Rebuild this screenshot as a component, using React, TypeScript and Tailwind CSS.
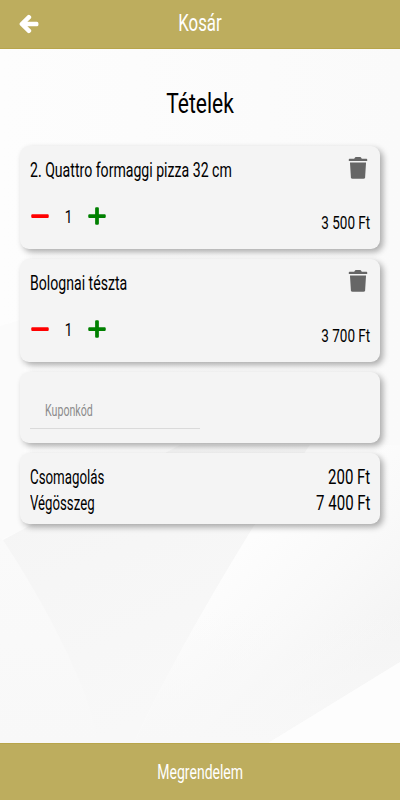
import type { ReactNode } from 'react';
import { FaArrowLeft, FaMinus, FaPlus } from 'react-icons/fa';

interface CartItem {
  id: number;
  name: string;
  quantity: number;
  price: string;
}

const items: CartItem[] = [
  { id: 1, name: '2. Quattro formaggi pizza 32 cm', quantity: 1, price: '3 500 Ft' },
  { id: 2, name: 'Bolognai tészta', quantity: 1, price: '3 700 Ft' },
];

function Card({ children, className }: { children: ReactNode; className: string }) {
  return (
    <div className={`mx-5 rounded-[9px] bg-[#f4f4f4] px-2.5 shadow-[3px_3px_6px_rgba(0,0,0,0.33)] ${className}`}>
      {children}
    </div>
  );
}

function TrashIcon({ className }: { className: string }) {
  return (
    <svg className={className} viewBox="0 0 20 22" fill="currentColor">
      <path d="M1.5 1.7 H6.2 L7 .5 Q7.2 .1 7.7 .1 H12.3 Q12.8 .1 13 .5 L13.8 1.7 H18.5 Q19.2 1.7 19.2 2.4 V4 H.8 V2.4 Q.8 1.7 1.5 1.7 Z" />
      <path d="M2 5.5 H18 L17.1 20.2 Q17 21.8 15.4 21.8 H4.6 Q3 21.8 2.9 20.2 Z" />
    </svg>
  );
}

function Backdrop() {
  return (
    <svg className="absolute inset-0 -z-10 h-full w-full" viewBox="0 0 400 694" preserveAspectRatio="none">
      <defs>
        <linearGradient id="sky" x1="0" y1="0" x2="1" y2="0">
          <stop offset="0" stopColor="#fdfdfd" />
          <stop offset="1" stopColor="#fafafa" />
        </linearGradient>
        <linearGradient id="wide" gradientUnits="userSpaceOnUse" x1="20" y1="460" x2="120" y2="680">
          <stop offset="0" stopColor="#f5f5f5" />
          <stop offset="1" stopColor="#f8f8f8" />
        </linearGradient>
        <linearGradient id="corner" x1="0" y1="0" x2="0" y2="1">
          <stop offset="0" stopColor="#fafafa" />
          <stop offset="1" stopColor="#f8f8f8" />
        </linearGradient>
        <linearGradient id="fold" gradientUnits="userSpaceOnUse" x1="250" y1="490" x2="370" y2="610">
          <stop offset="0" stopColor="#fdfdfd" />
          <stop offset="0.5" stopColor="#f9f9f9" />
          <stop offset="1" stopColor="#f4f4f4" />
        </linearGradient>
        <linearGradient id="foldEnd" gradientUnits="userSpaceOnUse" x1="0" y1="560" x2="0" y2="694">
          <stop offset="0" stopColor="#f8f8f8" stopOpacity="0" />
          <stop offset="1" stopColor="#f8f8f8" />
        </linearGradient>
      </defs>
      <rect width="400" height="694" fill="url(#sky)" />
      <path d="M0 277 L24 270 L24 480 L0 491 Z" fill="#fbfbfb" />
      <path d="M3 491 L180 396 L310 396 L252 480 Q175 605 134 694 L0 694 Z" fill="url(#wide)" />
      <path d="M0 488 L3 491 Q55 570 85 645 L100 694 L0 694 Z" fill="url(#corner)" />
      <path d="M310 396 L400 396 L400 613 L268 694 L134 694 Q175 605 252 480 Z" fill="url(#fold)" />
      <path d="M400 560 L400 613 L268 694 L134 694 Q165 628 202 560 Z" fill="url(#foldEnd)" />
      <path d="M400 613 L400 694 L268 694 Z" fill="#fdfdfd" />
    </svg>
  );
}

export default function App() {
  return (
    <div className="flex h-[800px] w-full flex-col overflow-hidden font-[Roboto,sans-serif] text-black">
      {/* Header */}
      <header className="grid h-[49px] shrink-0 grid-cols-[1fr_auto_1fr] items-center border-b border-[#b8a54b] bg-[#bdad5e] text-white">
        <button className="ml-[19px] w-5">
          <FaArrowLeft className="h-5 w-5 overflow-visible stroke-white stroke-[36px]" />
        </button>
        <h1 className="scale-x-[0.7] pb-0.5 text-2xl">Kosár</h1>
      </header>

      <main className="relative isolate flex flex-1 flex-col gap-2.5">
        <Backdrop />
        <h2 className="mt-[37px] mb-[14px] scale-x-[0.75] text-center text-[28px] leading-9">Tételek</h2>

        {/* Cart items */}
        {items.map((item) => (
          <Card key={item.id} className="flex h-[103px] justify-between">
            <div className="flex w-[220px] flex-col">
              <h3 className="mt-[10px] origin-left scale-x-[0.705] text-xl leading-7 whitespace-nowrap">{item.name}</h3>
              <div className="mt-[18px] flex h-7 items-start">
                <FaMinus className="mt-1 h-5 w-5 text-[#ff0000]" />
                <span className="mt-[3px] w-[37px] scale-x-[0.75] text-center text-lg leading-6">{item.quantity}</span>
                <FaPlus className="mt-1 h-5 w-5 text-[#008000]" />
              </div>
            </div>
            <div className="flex flex-col items-end">
              <TrashIcon className="mt-[11px] mr-[2px] h-[22px] w-5 text-[#666666]" />
              <span className="mt-[32px] origin-right scale-x-[0.75] text-lg leading-6 whitespace-nowrap">{item.price}</span>
            </div>
          </Card>
        ))}

        {/* Coupon */}
        <Card className="h-[71px]">
          <div className="mt-[18px] flex h-[39px] w-[170px] items-center border-b border-[#dadada] pt-1 pl-[15px]">
            <span className="origin-left scale-x-[0.665] text-base text-[#8c8c8c]">Kuponkód</span>
          </div>
        </Card>

        {/* Totals */}
        <Card className="h-[71px] pt-[11px] text-xl leading-[26px]">
          <div className="flex justify-between">
            <span className="origin-left scale-x-[0.665]">Csomagolás</span>
            <span className="origin-right scale-x-[0.75]">200 Ft</span>
          </div>
          <div className="flex justify-between">
            <span className="origin-left scale-x-[0.66]">Végösszeg</span>
            <span className="origin-right scale-x-[0.75]">7 400 Ft</span>
          </div>
        </Card>
      </main>

      <button className="h-[57px] shrink-0 border-t border-[#b8a54b] bg-[#bdad5e] text-xl text-white">
        <span className="inline-block scale-x-[0.7]">Megrendelem</span>
      </button>
    </div>
  );
}
